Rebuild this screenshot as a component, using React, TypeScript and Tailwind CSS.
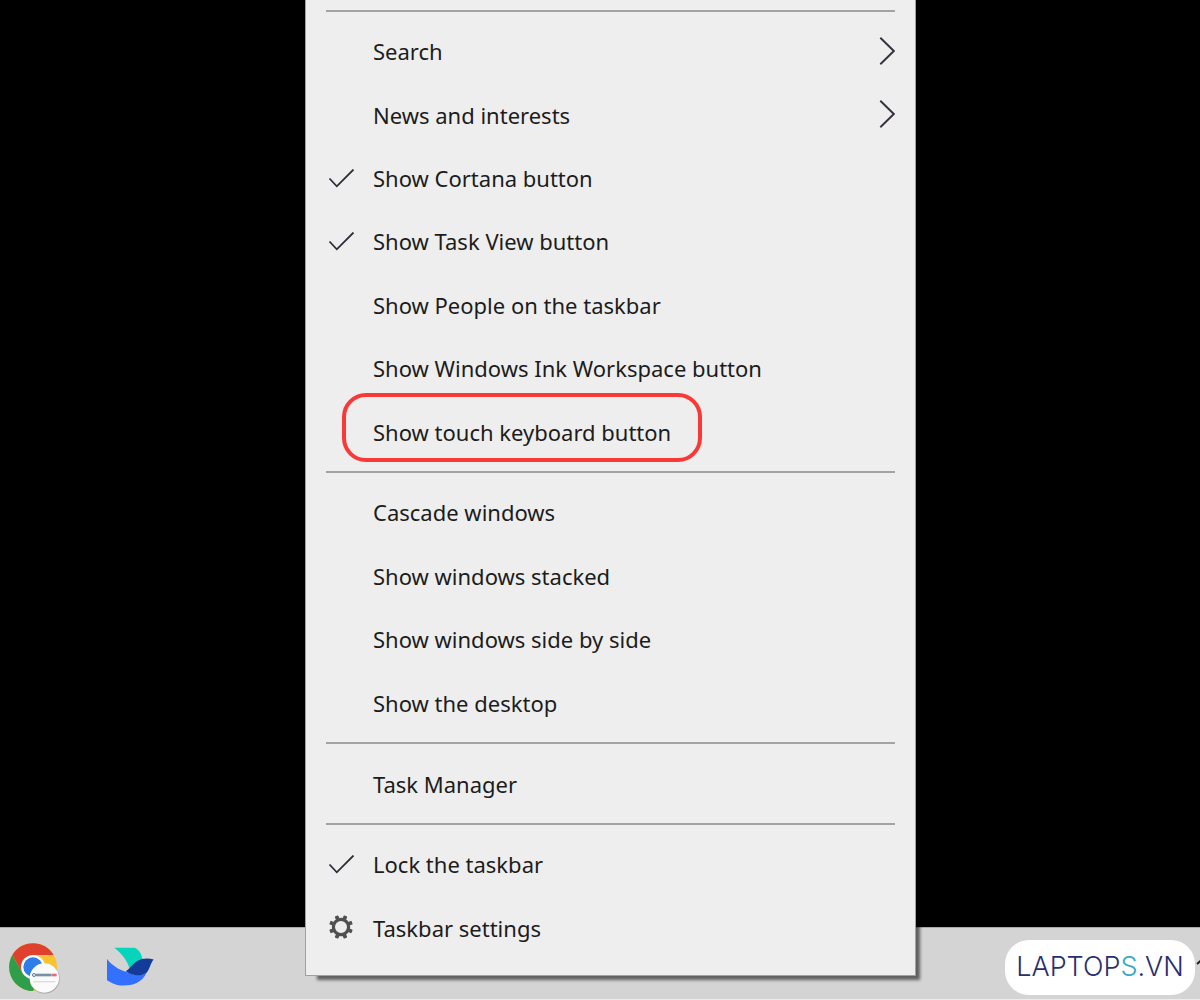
import React from "react";

type Item = {
  label: string;
  icon?: "check" | "gear";
  submenu?: boolean;
  highlighted?: boolean;
};

type Group = { height: string; items: Item[] };

const groups: Group[] = [
  {
    height: "h-[444px]",
    items: [
      { label: "Search", submenu: true },
      { label: "News and interests", submenu: true },
      { label: "Show Cortana button", icon: "check" },
      { label: "Show Task View button", icon: "check" },
      { label: "Show People on the taskbar" },
      { label: "Show Windows Ink Workspace button" },
      { label: "Show touch keyboard button", highlighted: true },
    ],
  },
  {
    height: "h-[254px]",
    items: [
      { label: "Cascade windows" },
      { label: "Show windows stacked" },
      { label: "Show windows side by side" },
      { label: "Show the desktop" },
    ],
  },
  { height: "h-16", items: [{ label: "Task Manager" }] },
  {
    height: "h-[127px]",
    items: [
      { label: "Lock the taskbar", icon: "check" },
      { label: "Taskbar settings", icon: "gear" },
    ],
  },
];

function CheckIcon() {
  return (
    <svg viewBox="0 0 28 20" className="w-7 h-5" fill="none" stroke="#2f2c38" strokeWidth="1.8">
      <path d="M2.5 9.5L9.8 17.3L26.5 0.5" />
    </svg>
  );
}

function GearIcon() {
  const teeth = [22.5, 67.5, 112.5, 157.5, 202.5, 247.5, 292.5, 337.5];
  return (
    <svg viewBox="-13 -12 26 26" className="w-[26px] h-[26px]">
      <circle r="7.6" fill="none" stroke="#505050" strokeWidth="3.2" />
      {teeth.map((angle) => (
        <rect key={angle} x="-1.9" y="-12" width="3.8" height="5" rx="0.8" fill="#505050" transform={`rotate(${angle})`} />
      ))}
    </svg>
  );
}

function ChevronIcon() {
  return (
    <svg viewBox="0 0 16 30" className="w-4 h-[30px]" fill="none" stroke="#35303c" strokeWidth="1.9">
      <path d="M1.3 0.7L14.8 14L1.3 27.3" />
    </svg>
  );
}

function ChromeIcon() {
  return (
    <svg viewBox="26 68 153 153" className="w-[51px] h-[51px]">
      <circle cx="98" cy="140" r="72" fill="#f9c22e" />
      <path d="M98 140L129 158L98 212A72 72 0 0 1 36 104L67 158Z" fill="#2e9e4a" />
      <path d="M98 140L67 158L36 104A72 72 0 0 1 160 104H98Z" fill="#e0412f" />
      <circle cx="98" cy="140" r="36" fill="#fff" />
      <circle cx="98" cy="140" r="29" fill="#2f7de8" />
      <circle cx="133" cy="175" r="45" fill="#aaa" />
      <circle cx="132" cy="173" r="44" fill="#fbfbfb" />
      <circle cx="101" cy="164" r="4.5" fill="none" stroke="#55789a" strokeWidth="3" />
      <path d="M106 164H152" stroke="#7890a8" strokeWidth="8" />
      <path d="M153 164H169" stroke="#d9727a" strokeWidth="8" />
      <path d="M99 184H165" stroke="#dcdcdc" strokeWidth="4" />
    </svg>
  );
}

function BirdIcon() {
  return (
    <svg viewBox="321 81 142 117" className="w-[47px] h-[39px]">
      <path d="M343 83H405C420 90 426 104 428 118C412 122 400 138 390 148C384 125 366 100 343 83Z" fill="#06d5bb" />
      <path d="M321 117C335 135 355 149 380 156C400 166 420 168 440 160C425 189 400 197 370 197C350 197 335 190 321 181Z" fill="#3370ff" />
      <path d="M462 118C452 130 450 148 440 159C420 172 395 166 378 154C390 146 398 132 412 123C428 113 448 114 462 118Z" fill="#133c9a" />
    </svg>
  );
}

function Separator() {
  return <hr className="mx-5 mt-[7px] mb-2 h-0.5 border-0 bg-[#a3a3a3]" />;
}

function MenuItem({ item }: { item: Item }) {
  return (
    <li className="relative flex flex-1">
      <button type="button" className="flex w-full items-center pr-5 text-left text-[22px] text-[#1c1c1c]">
        <span className="flex w-[67px] shrink-0 justify-center pl-0.5">
          {item.icon === "check" && <CheckIcon />}
          {item.icon === "gear" && <GearIcon />}
        </span>
        <span className="flex-1 whitespace-nowrap">{item.label}</span>
        {item.submenu && <ChevronIcon />}
      </button>
      {item.highlighted && (
        <span className="pointer-events-none absolute -top-2 left-9 h-[69px] w-[360px] rounded-3xl border-4 border-[#f93838]" />
      )}
    </li>
  );
}

export default function App() {
  return (
    <main className="relative flex min-h-screen flex-col overflow-hidden bg-black font-['Noto_Sans',sans-serif]">
      <footer className="mt-auto flex h-[73px] items-center border-t border-b border-t-[#a8a8a8] border-b-[#ececec] bg-[#d4d4d4] pl-[9px]">
        <button type="button" aria-label="Google Chrome" className="mt-2.5">
          <ChromeIcon />
        </button>
        <button type="button" aria-label="Lark" className="mt-1.5 ml-[47px]">
          <BirdIcon />
        </button>
        <button type="button" aria-label="Show hidden icons" className="-mr-2 mb-1 ml-auto">
          <svg viewBox="0 0 12 8" className="h-2 w-3" fill="none" stroke="#222" strokeWidth="2">
            <path d="M1 6L6 1.5L11 6" />
          </svg>
        </button>
      </footer>

      <nav className="absolute bottom-6 left-[305px] w-[611px] border border-t-0 border-[#a0a0a0] bg-[#eeeeee] pt-1 pb-[15px] shadow-[8px_8px_3px_-4px_rgba(0,0,0,0.55)]">
        {groups.map((group) => (
          <React.Fragment key={group.items[0].label}>
            <Separator />
            <ul className={`flex flex-col ${group.height}`}>
              {group.items.map((item) => (
                <MenuItem key={item.label} item={item} />
              ))}
            </ul>
          </React.Fragment>
        ))}
      </nav>

      <a
        href="#"
        className="absolute right-[5px] bottom-[5px] flex h-[55px] w-[190px] items-center justify-center rounded-3xl bg-white font-['Inter',sans-serif] text-[27px] font-light text-[#2b2e6e]"
      >
        LAPTOP<span className="text-[#35a9c9]">S</span>.VN
      </a>
    </main>
  );
}
